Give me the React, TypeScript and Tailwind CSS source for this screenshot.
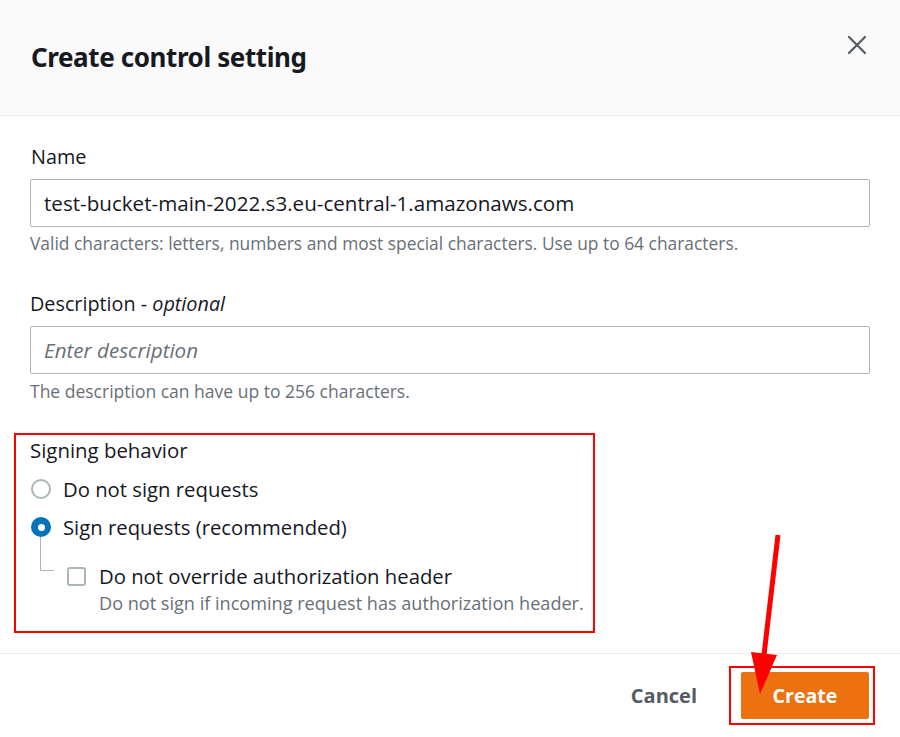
import React from "react";

export default function App() {
  return (
    <div className="relative w-[900px] h-[737px] bg-white overflow-hidden text-[#16191f]" style={{ fontFamily: '"Open Sans", sans-serif' }}>
      {/* Header */}
      <div className="h-[116px] bg-[#fafafa] border-b border-[#eaeded] flex items-center justify-between pl-[31px] pr-[33px]">
        <h1 className="text-[26px] leading-[32px] font-bold tracking-[-0.4px] mb-[2px]" style={{ fontFamily: '"Noto Sans", sans-serif' }}>Create control setting</h1>
        <svg width="20" height="20" viewBox="0 0 20 20" className="mb-[26px]">
          <path d="M2 2 L18 18 M18 2 L2 18" stroke="#545b64" strokeWidth="2.2" strokeLinecap="round" />
        </svg>
      </div>

      {/* Body */}
      <div className="px-[30px] pt-[28px]">
        <div className="text-[19.8px] leading-[26px] pl-[1px]">Name</div>
        <div className="mt-[9px] h-[48px] border border-[#aab7b8] rounded-[2px] flex items-center px-[13px] text-[20.6px]">
          test-bucket-main-2022.s3.eu-central-1.amazonaws.com
        </div>
        <div className="mt-[5px] text-[17.4px] text-[#687078] leading-[22px]">
          Valid characters: letters, numbers and most special characters. Use up to 64 characters.
        </div>

        <div className="mt-[37px] text-[19.8px] leading-[26px]">
          Description - <i>optional</i>
        </div>
        <div className="mt-[9px] h-[48px] border border-[#aab7b8] rounded-[2px] flex items-center px-[13px] text-[20.6px] italic text-[#687078]">
          Enter description
        </div>
        <div className="mt-[6px] text-[17.5px] text-[#687078] leading-[22px]">
          The description can have up to 256 characters.
        </div>
      </div>

      {/* Signing behavior */}
      <div className="absolute left-[14px] top-[433px] w-[581px] h-[200px] border-2 border-[#ff0000]" />
      <div className="pl-[30px] pt-[35px]">
        <div className="text-[20.4px] leading-[26px]">Signing behavior</div>
        <div className="mt-[13px] flex items-center h-[26px]">
          <div className="w-[20px] h-[20px] rounded-full border-2 border-[#aab7b8] ml-[1px]" />
          <span className="ml-[12px] text-[20.3px]">Do not sign requests</span>
        </div>
        <div className="mt-[12px] flex items-center h-[26px] relative">
          <div className="w-[20px] h-[20px] rounded-full bg-[#0073bb] ml-[1px] flex items-center justify-center">
            <div className="w-[7px] h-[7px] rounded-full bg-white" />
          </div>
          <span className="ml-[12px] text-[20.3px]">Sign requests (recommended)</span>
          <div className="absolute left-[10px] top-[23px] w-[14px] h-[34px] border-l border-b border-[#aab7b8]" />
        </div>
        <div className="mt-[23px] flex items-center ml-[37px] h-[26px]">
          <div className="w-[19px] h-[19px] rounded-[3px] border-2 border-[#aab7b8]" />
          <span className="ml-[13px] text-[20.3px]">Do not override authorization header</span>
        </div>
        <div className="ml-[69px] mt-[2px] text-[18.1px] text-[#687078] leading-[24px]">
          Do not sign if incoming request has authorization header.
        </div>
      </div>

      {/* Footer */}
      <div className="absolute left-0 right-0 top-[653px] border-t border-[#eaeded] h-[84px] flex items-center justify-end pr-[31px]">
        <span className="text-[20px] font-bold text-[#545b64] mr-[44px]">Cancel</span>
        <div className="relative">
          <div className="absolute -left-[12px] -top-[6px] -right-[6px] -bottom-[6px] border-2 border-[#ff0000]" />
          <div className="w-[128px] h-[47px] bg-[#ec7211] rounded-[2px] flex items-center justify-center text-white text-[19.6px] font-bold">
            Create
          </div>
        </div>
      </div>

      {/* Red arrow */}
      <svg className="absolute left-0 top-0 pointer-events-none" width="900" height="737">
        <line x1="778" y1="535" x2="764" y2="655" stroke="#ff0000" strokeWidth="5" />
        <polygon points="751,652 777,655 760,694" fill="#ff0000" />
      </svg>
    </div>
  );
}
